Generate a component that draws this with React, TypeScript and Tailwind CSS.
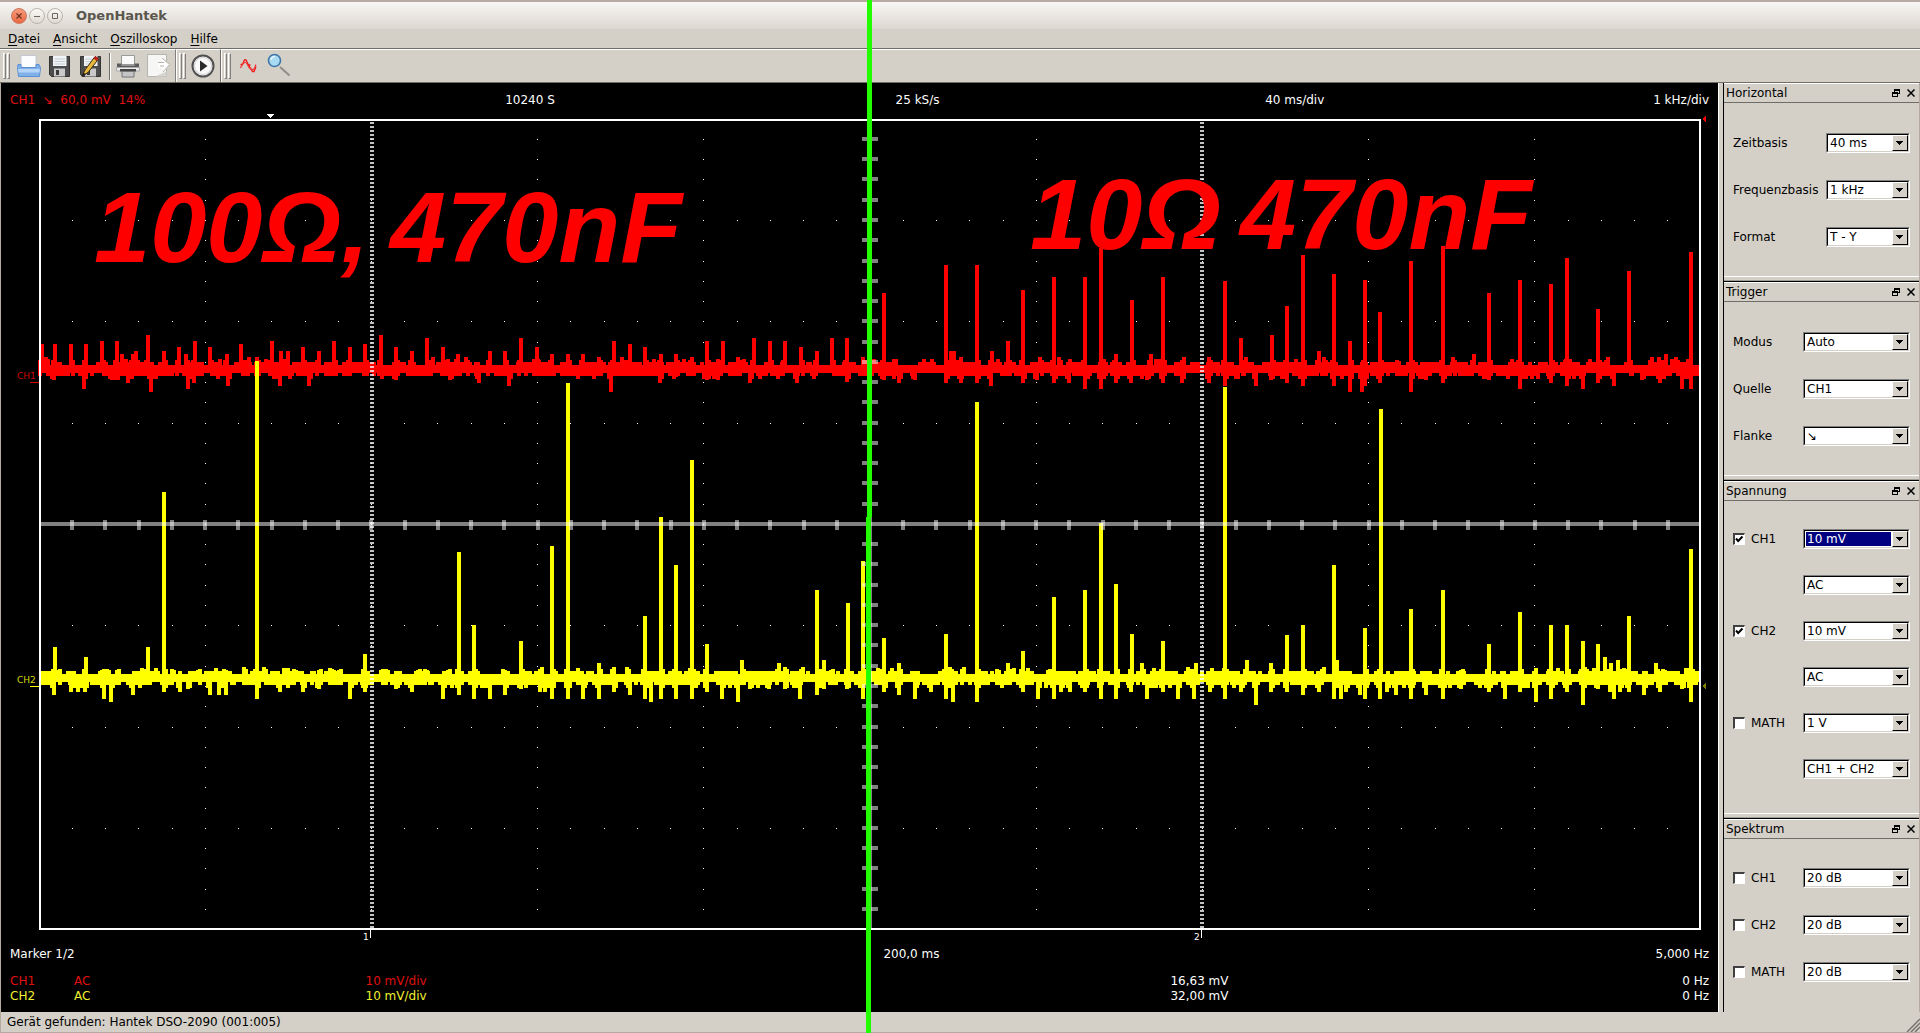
import type { ReactNode } from 'react'

type Point = [number, number]

const RED = '#ff0000'
const YELLOW = '#ffff00'

// Peaks above and below the base line, as x, y pairs in scope coordinates
const CH1_UP = [
  42, 344, 46, 357, 55, 344, 71, 344, 86, 344, 102, 341, 117, 341, 122, 354, 133, 354, 136, 351, 148, 335, 164, 351,
  179, 347, 186, 354, 195, 341, 210, 347, 227, 354, 241, 344, 249, 357, 257, 357, 272, 341, 281, 351, 288, 351,
  303, 347, 319, 351, 334, 341, 350, 347, 365, 344, 381, 335, 396, 347, 412, 351, 427, 338, 433, 357, 443, 347,
  458, 354, 466, 357, 490, 351, 505, 351, 521, 338, 537, 347, 552, 354, 568, 354, 583, 354, 599, 357, 614, 341,
  622, 357, 630, 344, 645, 347, 661, 354, 676, 354, 692, 357, 707, 341, 723, 341, 738, 357, 754, 338, 770, 341,
  785, 341, 801, 347, 817, 351, 832, 338, 847, 338, 863, 357, 884, 293, 946, 265, 951, 351, 954, 351, 961, 357,
  977, 265, 992, 351, 1008, 341, 1023, 290, 1040, 357, 1054, 277, 1059, 357, 1085, 277, 1101, 248, 1116, 354,
  1132, 300, 1151, 354, 1163, 277, 1184, 357, 1209, 357, 1225, 281, 1241, 338, 1246, 357, 1272, 335, 1287, 306,
  1303, 255, 1319, 351, 1324, 357, 1334, 274, 1350, 341, 1365, 280, 1380, 312, 1399, 361, 1411, 261, 1443, 246,
  1453, 357, 1474, 354, 1489, 293, 1520, 280, 1551, 284, 1567, 258, 1598, 309, 1608, 357, 1629, 271, 1652, 357,
  1659, 357, 1666, 354, 1676, 357, 1691, 252,
]

const CH1_DOWN = [
  54, 380, 84, 389, 112, 380, 115, 380, 118, 380, 128, 383, 151, 392, 188, 389, 194, 383, 228, 386, 280, 386,
  309, 386, 396, 380, 450, 380, 479, 383, 509, 386, 611, 392, 660, 383, 676, 377, 707, 380, 718, 380, 750, 383,
  797, 383, 847, 382, 884, 380, 899, 383, 915, 380, 946, 383, 961, 383, 977, 383, 991, 386, 1023, 383, 1037, 380,
  1054, 383, 1069, 383, 1085, 389, 1101, 389, 1116, 383, 1131, 383, 1147, 380, 1163, 383, 1182, 383, 1209, 383,
  1225, 386, 1256, 386, 1271, 380, 1287, 383, 1303, 386, 1334, 386, 1350, 392, 1362, 392, 1365, 386, 1380, 383,
  1411, 392, 1426, 380, 1443, 383, 1489, 380, 1520, 389, 1551, 383, 1567, 386, 1583, 389, 1598, 383, 1614, 386,
  1642, 380, 1660, 383, 1682, 389, 1691, 389,
]

const CH2_UP = [
  55, 647, 58, 670, 86, 657, 102, 670, 109, 670, 117, 670, 148, 647, 164, 492, 174, 670, 198, 670, 226, 670,
  244, 667, 257, 361, 264, 667, 296, 670, 319, 670, 334, 670, 339, 670, 365, 654, 381, 670, 388, 670, 418, 670,
  427, 670, 448, 670, 459, 552, 474, 625, 505, 670, 521, 641, 542, 667, 552, 546, 568, 383, 599, 663, 614, 667,
  627, 667, 645, 616, 661, 517, 676, 565, 692, 460, 707, 644, 742, 660, 779, 663, 785, 667, 803, 667, 817, 590,
  824, 660, 831, 670, 848, 603, 863, 561, 884, 638, 899, 663, 946, 634, 950, 667, 964, 667, 977, 402, 999, 670,
  1008, 663, 1023, 651, 1048, 670, 1054, 597, 1085, 590, 1101, 523, 1116, 584, 1132, 634, 1142, 663, 1163, 641,
  1188, 667, 1196, 663, 1225, 387, 1247, 660, 1271, 663, 1287, 635, 1303, 625, 1324, 667, 1334, 565, 1337, 660,
  1365, 628, 1381, 409, 1411, 609, 1443, 590, 1461, 670, 1489, 644, 1520, 612, 1551, 625, 1567, 625, 1583, 641,
  1585, 667, 1598, 644, 1605, 657, 1611, 663, 1618, 660, 1629, 616, 1656, 663, 1665, 670, 1691, 549,
]

const CH2_DOWN = [
  54, 695, 71, 692, 78, 692, 85, 692, 104, 699, 111, 702, 133, 695, 164, 692, 180, 692, 188, 689, 210, 695,
  219, 695, 226, 695, 257, 699, 280, 692, 303, 692, 319, 689, 350, 699, 365, 692, 396, 689, 412, 692, 443, 699,
  459, 695, 474, 699, 490, 699, 505, 695, 521, 689, 540, 692, 545, 692, 552, 699, 568, 699, 583, 699, 599, 699,
  614, 692, 630, 695, 645, 699, 651, 702, 661, 699, 676, 699, 692, 699, 707, 692, 722, 699, 738, 702, 750, 689,
  769, 689, 785, 689, 800, 699, 817, 695, 824, 689, 847, 689, 863, 699, 884, 692, 899, 695, 915, 699, 931, 692,
  946, 699, 953, 702, 977, 702, 1023, 692, 1038, 699, 1054, 699, 1061, 692, 1070, 692, 1085, 692, 1101, 699,
  1116, 699, 1131, 692, 1147, 699, 1163, 692, 1178, 699, 1194, 699, 1210, 692, 1225, 699, 1241, 692, 1256, 705,
  1271, 692, 1287, 692, 1303, 695, 1319, 692, 1334, 699, 1341, 699, 1346, 692, 1360, 695, 1365, 699, 1380, 699,
  1387, 692, 1396, 695, 1411, 699, 1426, 695, 1443, 699, 1461, 689, 1489, 692, 1505, 699, 1520, 692, 1536, 702,
  1551, 699, 1567, 692, 1583, 705, 1598, 689, 1610, 692, 1614, 699, 1620, 692, 1629, 692, 1644, 695, 1660, 692,
  1682, 689, 1691, 702,
]

function pairs(values: number[]): Point[] {
  const out: Point[] = []
  for (let i = 0; i < values.length; i += 2) out.push([values[i], values[i + 1]])
  return out
}

// One vertical stroke per sample column, plus the peaks
function tracePath(top: number, bottom: number, up: number[], down: number[], seed: number) {
  let state = seed
  const next = () => {
    state = (state * 1103515245 + 12345) % 2147483648
    return state / 2147483648
  }
  // Narrow bumps sit on wider ones, which gives the base line its ragged edge
  const wide = { up: 0, down: 0, left: 0 }
  let d = ''
  for (let x = 42; x < 1700; x += 2) {
    if (wide.left <= 0) {
      wide.up = next() > 0.55 ? 3 : 0
      wide.down = next() > 0.55 ? 3 : 0
      wide.left = 2 + Math.floor(next() * 4)
    }
    wide.left--
    const a = next()
    const b = next()
    const y1 = top - wide.up - (a > 0.92 ? 3 : 0)
    const y2 = bottom + wide.down + (b > 0.88 ? 3 : 0)
    d += `M${x} ${y1}V${y2}`
  }
  const mid = Math.round((top + bottom) / 2)
  pairs(up).forEach(([x, y]) => (d += `M${x} ${y}V${mid}`))
  pairs(down).forEach(([x, y]) => (d += `M${x} ${mid}V${y}`))
  // Every peak has a wider foot
  pairs(up).forEach(([x], i) => (d += `M${x + (i % 2 ? 2 : -2)} ${top - 5}V${bottom + 3}`))
  pairs(down).forEach(([x], i) => (d += `M${x + (i % 2 ? 2 : -2)} ${top}V${bottom + 6}`))
  return d
}

const CH1_TRACE = tracePath(365, 373, CH1_UP, CH1_DOWN, 7)
const CH2_TRACE = tracePath(674, 682, CH2_UP, CH2_DOWN, 21)

function gridPath() {
  let d = ''
  for (let row = 1; row < 8; row++) {
    if (row === 4) continue
    for (let i = 1; i < 50; i++) d += `M${Math.floor(39.1 + i * 33.24)} ${Math.floor(119.2 + row * 101.3)}h1v1h-1z`
  }
  for (let col = 1; col < 10; col++) {
    for (let i = 1; i < 40; i++) d += `M${Math.floor(39.1 + col * 166.2)} ${Math.floor(119.2 + i * 20.26)}h1v1h-1z`
  }
  return d
}

function tickPath() {
  let d = ''
  for (let i = 1; i < 50; i++) {
    if (i !== 25) d += `M${Math.round(37 + i * 33.24)} 520h4v10h-4z`
  }
  for (let i = 1; i < 40; i++) {
    if (i !== 20) d += `M862 ${Math.floor(117.2 + i * 20.26)}h16v4h-16z`
  }
  return d
}

function Scope() {
  return (
    <svg
      viewBox="1 112 1717 833"
      className="block h-auto w-full"
      shapeRendering="crispEdges"
      fontFamily="'DejaVu Sans', sans-serif"
      fontSize="9"
      role="img"
      aria-label="Oszilloskop"
    >
      <path d={gridPath()} fill="#fff" />
      <path d={CH1_TRACE} stroke={RED} strokeWidth="4" />
      <path d={CH2_TRACE} stroke={YELLOW} strokeWidth="4" />

      {/* Axes */}
      <g fill="#fff" fillOpacity="0.5">
        <path d="M41 522H1699V526H41z" />
        <path d="M868 121H872V928H868z" />
        <path d={tickPath()} />
      </g>

      {/* Markers */}
      <g stroke="#fff" strokeOpacity="0.76" strokeWidth="4" strokeDasharray="2 2">
        <path d="M372 122V928" />
        <path d="M1202 122V928" />
      </g>
      <path d="M370 930h1v8h-1zM1201 930h1v8h-1z" fill="#fff" />
      <text x="363" y="940" fill="#fff">1</text>
      <text x="1194" y="940" fill="#fff">2</text>

      <path d="M40 120H1700V929H40z" fill="none" stroke="#fff" strokeWidth="2" />
      <path d="M266 114h8l-4 4z" fill="#fff" />
      <path d="M1702 119l4-3v6z" fill={RED} />
      <path d="M1702 686l4-3v6z" fill="#808000" />

      <text x="17" y="379" fill="#d00000">CH1</text>
      <path d="M30 382h9v1h-9z" fill="#d00000" />
      <text x="17" y="683" fill="#d8d800">CH2</text>
      <path d="M30 686h9v1h-9z" fill={YELLOW} />

      <g fill={RED} fontFamily="'Liberation Sans', sans-serif" fontSize="101" fontWeight="bold" fontStyle="italic">
        <text y="262">
          <tspan x="94">100Ω,</tspan> <tspan x="390">470nF</tspan>
        </text>
        <text y="249">
          <tspan x="1030">10Ω</tspan> <tspan x="1240">470nF</tspan>
        </text>
      </g>
    </svg>
  )
}

function TitleBar() {
  return (
    <header className="flex h-[29px] items-center gap-0.5 border-t-2 border-[#b5aba1] bg-linear-to-b from-[#f8f7f5] to-[#dcd7cf] pl-[11px]">
      <button type="button" aria-label="Schließen" className="size-4 rounded-full border border-[#c9775c] bg-linear-to-b from-[#f79a7c] to-[#e9683f]">
        <svg viewBox="0 0 14 14" className="size-full" stroke="#6b3421" strokeWidth="1.2">
          <path d="M4.5 4.5l5 5M9.5 4.5l-5 5" />
        </svg>
      </button>
      <button type="button" aria-label="Minimieren" className="size-4 rounded-full border border-[#b9b3aa] bg-linear-to-b from-[#fbfaf8] to-[#dedad3]">
        <svg viewBox="0 0 14 14" className="size-full" stroke="#6b665e">
          <path d="M4 7.5h6" />
        </svg>
      </button>
      <button type="button" aria-label="Maximieren" className="size-4 rounded-full border border-[#b9b3aa] bg-linear-to-b from-[#fbfaf8] to-[#dedad3]">
        <svg viewBox="0 0 14 14" className="size-full" fill="none" stroke="#6b665e">
          <path d="M4.5 4.5h5v5h-5z" />
        </svg>
      </button>
      <h1 className="pl-[11px] text-[13px] leading-4 font-bold text-[#5a564e]">OpenHantek</h1>
    </header>
  )
}

function MenuBar() {
  const items = ['Datei', 'Ansicht', 'Oszilloskop', 'Hilfe']
  return (
    <nav className="flex h-[19px] items-end gap-[13px] px-2 pb-px leading-[15px]">
      {items.map((item) => (
        <button key={item} type="button">
          <span className="underline underline-offset-2">{item[0]}</span>
          {item.slice(1)}
        </button>
      ))}
    </nav>
  )
}

function Handle() {
  return (
    <div className="flex gap-px" aria-hidden="true">
      <div className="h-[26px] w-[3px] border-t border-r border-b border-l border-t-white border-r-[#808080] border-b-[#808080] border-l-white" />
      <div className="h-[26px] w-[3px] border-t border-r border-b border-l border-t-white border-r-[#808080] border-b-[#808080] border-l-white" />
    </div>
  )
}

function ToolButton({ label, children }: { label: string; children: ReactNode }) {
  return (
    <button type="button" aria-label={label} className="size-6">
      <svg viewBox="0 0 24 24" className="size-6">
        {children}
      </svg>
    </button>
  )
}

function Floppy() {
  return (
    <>
      <path d="M1.500 2.500h20v20h-18l-2-2z" fill="#4c4c4c" stroke="#333" />
      <path d="M5 2h13.500v10H5z" fill="#f2f4f6" />
      <path d="M6.500 5h10.500M6.500 7.500h10.500M6.500 10h10.500" stroke="#c3cbd3" />
      <path d="M6 14.500h11v8H6z" fill="#c9c9c9" />
      <path d="M8 16h3v5H8z" fill="#3a3a3a" />
    </>
  )
}

function ToolBar() {
  return (
    <div className="flex h-[35px] items-center border-t border-b border-t-[#6f6d68] border-b-[#6f6d68] leading-none">
      <div className="flex h-full items-center gap-[7px] border-t border-r border-t-white border-r-[#808080] pr-1 pl-[3px]">
        <Handle />
        <div className="flex gap-[7px]">
          <ToolButton label="Öffnen">
            <path d="M4 1.500h15v12H4z" fill="#fcfdff" stroke="#c4cad4" />
            <path d="M1 10.500h3v3h15v-3h3l1.500 3-1 9H1.500l-1-9z" fill="#7fb0ea" stroke="#5b8fd0" />
            <path d="M1 15h22l-.5 3.500h-21z" fill="#b5d5f8" />
          </ToolButton>
          <ToolButton label="Speichern">
            <Floppy />
          </ToolButton>
          <ToolButton label="Speichern unter">
            <Floppy />
            <path d="M3 22l3-6L16 2.500l3.500 2.500L9 18.500z" fill="#e8b93c" stroke="#3b2a10" />
            <path d="M14.500 4.500L16.500 2l3.200 2.300-2 2.600z" fill="#b8211c" />
            <path d="M4.500 18.500l2.500 2-4.500 2.500z" fill="#222" />
          </ToolButton>
        </div>
        <div className="-ml-px h-[27px] w-0.5 border-r border-l border-l-[#6f6d68] border-r-white" />
        <div className="-ml-0.5 flex gap-[7px]">
          <ToolButton label="Drucken">
            <path d="M5.500 1.500h13v9h-13z" fill="#fafafa" stroke="#999" />
            <path d="M1 9.500h4.500v2h13v-2H23v4H1z" fill="#5c5c5c" />
            <path d="M0.500 13.500h23v3.500H.5z" fill="#ececec" stroke="#aaa" />
            <path d="M4 15h16v2.500H4z" fill="#444" />
            <path d="M6 17.500h12v5.500H6z" fill="#c5c5c5" stroke="#777" />
          </ToolButton>
          <ToolButton label="Exportieren">
            <path d="M.5.500h19v22H.5z" fill="#f6f6f4" stroke="#b7b5b0" />
            <path d="M14.500 4l8.500 6.500-7 8v-5h-5V8h4z" fill="#fff" />
            <path d="M15 4l7.500 6.500-6.500 7.500M11 8.500h6M13 12h4" fill="none" stroke="#b3b1ac" />
            <path d="M8 22.500l11.500-5v5z" fill="#d8d6d1" />
          </ToolButton>
        </div>
      </div>
      <div className="flex h-full items-center gap-[5px] border-t border-r border-l border-t-white border-r-[#6f6d68] border-l-white pr-[5px] pl-0.5">
        <Handle />
        <ToolButton label="Start">
          <circle cx="12" cy="12" r="10.500" fill="#fff" stroke="#505050" strokeWidth="2" />
          <circle cx="12" cy="12" r="8.500" fill="#fafafa" stroke="#cfcfcf" />
          <path d="M9 6.500l7.500 5.500L9 17.500z" fill="#2b2b2b" />
        </ToolButton>
      </div>
      <div className="flex h-full flex-1 items-center gap-2 border-t border-l border-white pl-0.5">
        <Handle />
        <ToolButton label="Digitales Phosphor">
          <path d="M1.500 10.500h2L5.500 6h1.500l2.500 5h2M9.500 11l4 6.500h1.500l2-5" fill="none" stroke="#f01818" strokeWidth="1.300" />
          <path d="M1.500 14C3 10.500 4.500 8.500 6.300 8.500s2.500 3 3.700 5 2.500 2 4 2 2-1.500 2.800-5" fill="none" stroke="#f23030" strokeWidth="1.200" />
        </ToolButton>
        <div className="-ml-1">
          <ToolButton label="Zoom">
            <path d="M13 14l9.500 8.500" stroke="#8d8d8b" strokeWidth="2" />
            <circle cx="7.500" cy="7.500" r="6" fill="#a8daf2" stroke="#3f76a8" strokeWidth="1.600" />
            <path d="M4 7a4 4 0 0 1 4-3.500" fill="none" stroke="#e4f5fd" strokeWidth="1.500" />
          </ToolButton>
        </div>
      </div>
    </div>
  )
}

interface ComboProps {
  label: string
  value: string
  narrow?: boolean
  focused?: boolean
}

function Combo({ label, value, narrow, focused }: ComboProps) {
  return (
    <div className={`border-t border-r border-b border-l border-t-[#808080] border-r-white border-b-white border-l-[#808080] ${narrow ? 'w-[84px]' : 'w-[107px]'}`}>
      <div className="relative h-[18px] border-t border-r border-b border-l border-t-black border-r-[#d4d0c8] border-b-[#d4d0c8] border-l-black bg-white p-px">
        <select
          aria-label={label}
          className={`block h-[14px] w-[calc(100%-16px)] appearance-none pl-px text-xs leading-[14px] outline-none ${
            focused ? 'bg-[#000080] text-white' : 'bg-white text-black'
          }`}
        >
          <option>{value}</option>
        </select>
        <span className="pointer-events-none absolute top-0 right-0 flex h-4 w-4 items-center border-t border-r border-b border-l border-t-white border-r-black border-b-black border-l-white bg-[#d4d0c8] pl-[3px]">
          <svg viewBox="0 0 7 4" className="h-1 w-[7px]" shapeRendering="crispEdges">
            <path d="M0 0h7L3.500 4z" fill="#000" />
          </svg>
        </span>
      </div>
    </div>
  )
}

function Dock({ title, last, body, children }: { title: string; last?: boolean; body: string; children: ReactNode }) {
  return (
    <section>
      <div className="flex h-5 items-center justify-between border-t border-b border-t-white border-b-[#6f6d68] pr-1 pl-0.5">
        <h2 className="leading-[15px]">{title}</h2>
        <div className="flex gap-[7px]">
          <button type="button" aria-label={`${title} abdocken`}>
            <svg viewBox="0 0 8 8" className="size-2" fill="none" stroke="#000" shapeRendering="crispEdges">
              <path d="M2.500 3V.5h5v4H6M2.500 1.500h5M.5 3.500h5v4h-5zM.5 4.500h5" />
            </svg>
          </button>
          <button type="button" aria-label={`${title} schließen`}>
            <svg viewBox="0 0 8 8" className="size-2" stroke="#000" strokeWidth="1.500">
              <path d="M.5.500l7 7M7.500.500l-7 7" />
            </svg>
          </button>
        </div>
      </div>
      <div className={`flex flex-col px-[9px] ${body}`}>{children}</div>
      {!last && (
        <div className="h-1.5 border-t border-b border-t-white border-b-black">
          <div className="h-1 border-b border-[#a09d96]" />
        </div>
      )}
    </section>
  )
}

function Row({ label, value, narrow }: { label: string; value: string; narrow?: boolean }) {
  return (
    <div className="flex items-center justify-between">
      <span>{label}</span>
      <Combo label={label} value={value} narrow={narrow} />
    </div>
  )
}

function CheckRow({ label, value, checked, focused }: { label: string; value: string; checked?: boolean; focused?: boolean }) {
  return (
    <div className="flex items-center justify-between">
      <label className="flex items-center gap-1.5">
        <span className="relative block size-3">
          <input
            type="checkbox"
            defaultChecked={checked}
            className="peer block size-3 appearance-none border-t-2 border-r border-b border-l-2 border-t-[#404040] border-r-white border-b-white border-l-[#404040] bg-white"
          />
          <svg viewBox="0 0 12 12" className="pointer-events-none absolute inset-0 hidden size-3 peer-checked:block" fill="none" stroke="#000" strokeWidth="2">
            <path d="M3 5.500l2.200 2.500L9.500 3.500" />
          </svg>
        </span>
        {label}
      </label>
      <Combo label={label} value={value} focused={focused} />
    </div>
  )
}

function SubRow({ label, value }: { label: string; value: string }) {
  return (
    <div className="flex justify-end">
      <Combo label={label} value={value} />
    </div>
  )
}

function Sidebar() {
  return (
    <aside className="w-[197px] shrink-0 border-r border-l border-r-[#b5aba1] border-l-black">
      <Dock title="Horizontal" body="gap-[27px] pt-[30px] pb-[29px]">
        <Row label="Zeitbasis" value="40 ms" narrow />
        <Row label="Frequenzbasis" value="1 kHz" narrow />
        <Row label="Format" value="T - Y" narrow />
      </Dock>
      <Dock title="Trigger" body="gap-[27px] pt-[30px] pb-[29px]">
        <Row label="Modus" value="Auto" />
        <Row label="Quelle" value="CH1" />
        <Row label="Flanke" value="↘" />
      </Dock>
      <Dock title="Spannung" body="gap-[26px] pt-7 pb-[34px]">
        <CheckRow label="CH1" value="10 mV" checked focused />
        <SubRow label="CH1 Kopplung" value="AC" />
        <CheckRow label="CH2" value="10 mV" checked />
        <SubRow label="CH2 Kopplung" value="AC" />
        <CheckRow label="MATH" value="1 V" />
        <SubRow label="MATH Modus" value="CH1 + CH2" />
      </Dock>
      <Dock title="Spektrum" body="gap-[27px] pt-[29px] pb-[29px]" last>
        <CheckRow label="CH1" value="20 dB" />
        <CheckRow label="CH2" value="20 dB" />
        <CheckRow label="MATH" value="20 dB" />
      </Dock>
    </aside>
  )
}

function Readouts() {
  return (
    <div className="flex h-[29px] px-[9px] pt-2.5 leading-[15px] whitespace-pre text-white">
      <div className="w-40 text-[#e01010]">CH1  ↘  60,0 mV  14%</div>
      <div className="grid flex-1 grid-cols-4 text-right">
        <span>10240 S</span>
        <span>25 kS/s</span>
        <span>40 ms/div</span>
        <span>1 kHz/div</span>
      </div>
    </div>
  )
}

function Measurements() {
  const channels = [
    { name: 'CH1', coupling: 'AC', gain: '10 mV/div', amplitude: '16,63 mV', frequency: '0 Hz', color: 'text-[#e01010]' },
    { name: 'CH2', coupling: 'AC', gain: '10 mV/div', amplitude: '32,00 mV', frequency: '0 Hz', color: 'text-[#f0f030]' },
  ]
  return (
    <div className="px-[9px] pt-0.5 pb-2 leading-[15px] text-white">
      <div className="flex">
        <span className="w-40">Marker 1/2</span>
        <div className="grid flex-1 grid-cols-2 text-right">
          <span>200,0 ms</span>
          <span>5,000 Hz</span>
        </div>
      </div>
      <table className="mt-3 w-full table-fixed">
        <tbody>
          {channels.map((ch) => (
            <tr key={ch.name}>
              <td className={`w-16 ${ch.color}`}>{ch.name}</td>
              <td className={`w-10 ${ch.color}`}>{ch.coupling}</td>
              <td className={`w-[18.4%] text-right ${ch.color}`}>{ch.gain}</td>
              <td className="w-[47.2%] text-right">{ch.amplitude}</td>
              <td className="text-right">{ch.frequency}</td>
            </tr>
          ))}
        </tbody>
      </table>
    </div>
  )
}

export default function App() {
  return (
    <div className="relative flex min-h-screen flex-col bg-[#d4d0c8] font-['DejaVu_Sans',sans-serif] text-xs text-black">
      <TitleBar />
      <MenuBar />
      <ToolBar />
      <div className="flex flex-1 border-l border-[#b5aba1]">
        <main className="min-w-0 flex-1 bg-black">
          <Readouts />
          <Scope />
          <Measurements />
        </main>
        <div className="w-[5px] border-l border-white" />
        <Sidebar />
      </div>
      <footer className="flex h-[21px] items-center justify-between border-b border-l border-[#b5aba1] pl-1.5 leading-[15px]">
        <span>Gerät gefunden: Hantek DSO-2090 (001:005)</span>
        <svg viewBox="0 0 14 14" className="size-3.5 self-end" stroke="#77746e" strokeWidth="1.500">
          <path d="M1 14L14 1M5 14l9-9M9 14l5-5" />
        </svg>
      </footer>

      {/* Divider between the two measurements */}
      <div className="pointer-events-none absolute inset-y-0 left-[45.16%] w-[5px]">
        <div className="h-1/2 bg-[#22ff00]" />
        <div className="-ml-px h-1/2 w-[5px] bg-[#22ff00]" />
      </div>
    </div>
  )
}
